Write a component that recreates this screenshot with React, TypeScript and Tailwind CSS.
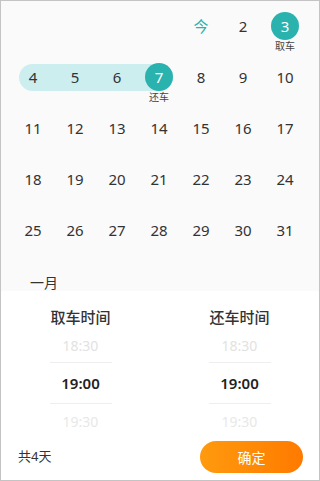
import React from 'react';

const FONT = '"Noto Sans", "Noto Sans CJK SC", sans-serif';

type Day = { n: string; tag?: string; mark?: 'today' | 'picked' };

const rows: Day[][] = [
  [{ n: '' }, { n: '' }, { n: '' }, { n: '' }, { n: '今', mark: 'today' }, { n: '2' }, { n: '3', tag: '取车', mark: 'picked' }],
  [{ n: '4' }, { n: '5' }, { n: '6' }, { n: '7', tag: '还车', mark: 'picked' }, { n: '8' }, { n: '9' }, { n: '10' }],
  ['11', '12', '13', '14', '15', '16', '17'].map((n) => ({ n })),
  ['18', '19', '20', '21', '22', '23', '24'].map((n) => ({ n })),
  ['25', '26', '27', '28', '29', '30', '31'].map((n) => ({ n })),
];

const DayCell = ({ d }: { d: Day }) => (
  <div className="w-[42px] flex flex-col items-center pt-[11px]">
    {d.mark === 'picked' ? (
      <div className="w-7 h-7 rounded-full bg-[#2ab2af] text-white flex items-center justify-center text-[15px]">{d.n}</div>
    ) : (
      <div className={`w-7 h-7 flex items-center justify-center text-[15px] ${d.mark === 'today' ? 'text-[#2ab2af]' : 'text-[#333]'}`}>
        {d.n}
      </div>
    )}
    {d.tag && <div className="text-[10px] leading-[12px] text-[#444]">{d.tag}</div>}
  </div>
);

const Picker = ({ title }: { title: string }) => (
  <div className="flex-1 flex flex-col items-center">
    <div className="text-[15px] leading-[22px] font-medium text-[#333]">{title}</div>
    <div className="h-[34px] flex items-center text-[14px] text-[#e2e2e2]">18:30</div>
    <div className="w-[62px] h-px bg-[#eeeeee]" />
    <div className="h-[40px] flex items-center text-[15px] font-semibold text-[#222]">19:00</div>
    <div className="w-[62px] h-px bg-[#eeeeee]" />
    <div className="h-[34px] flex items-center text-[14px] text-[#e8e8e8]">19:30</div>
  </div>
);

export default function App() {
  return (
    <div className="w-[320px] h-[481px] border border-[#c4c4c4] bg-[#fafafa] flex flex-col overflow-hidden" style={{ fontFamily: FONT }}>
      <div className="pl-[11px]">
        {rows.map((row, i) => (
          <div key={i} className="relative flex h-[51px]">
            {i === 1 && <div className="absolute left-[7px] top-[12px] w-[154px] h-[27px] rounded-full bg-[#cdeeee]" />}
            {row.map((d, j) => (
              <div key={j} className="relative">
                <DayCell d={d} />
              </div>
            ))}
          </div>
        ))}
      </div>
      <div className="pt-[20px] pl-[29px] text-[14px] leading-[14px] text-[#333] h-[35px]">一月</div>
      <div className="flex-1 bg-white flex flex-col">
        <div className="flex pt-[15px]">
          <Picker title="取车时间" />
          <Picker title="还车时间" />
        </div>
        <div className="flex items-center justify-between pl-[17px] pr-[16px] mt-[3px]">
          <span className="text-[13px] text-[#333]">共4天</span>
          <button className="w-[103px] h-[32px] rounded-full bg-gradient-to-r from-[#ff9a0e] to-[#ff7a00] text-white text-[14px]">
            确定
          </button>
        </div>
      </div>
    </div>
  );
}
